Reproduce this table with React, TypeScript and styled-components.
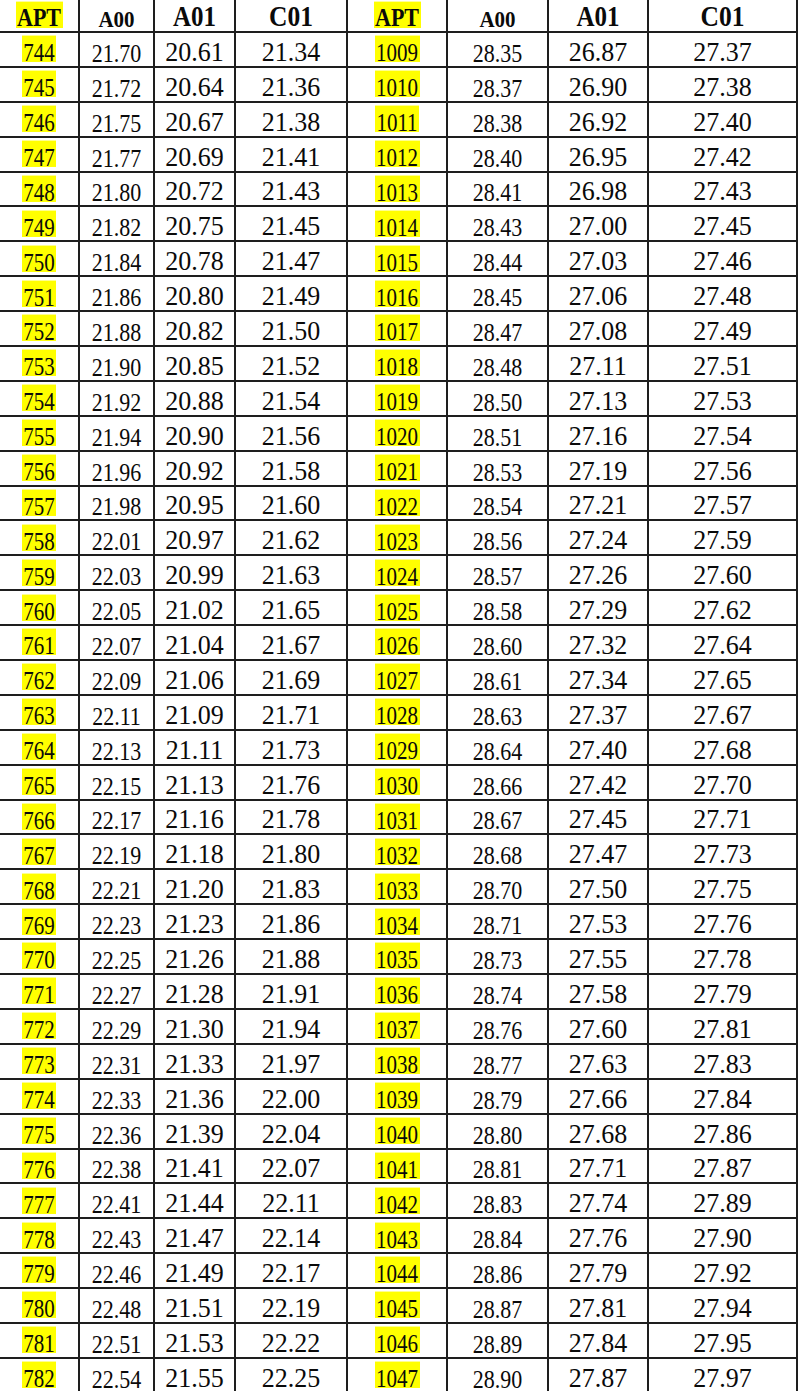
import React from "react";
import styled, { createGlobalStyle } from "styled-components";

const GlobalStyle = createGlobalStyle`
  html, body {
    margin: 0;
    padding: 0;
    background: #fff;
    overflow: hidden;
  }
  body {
    font-family: "Liberation Serif", "Times New Roman", serif;
    color: #0a0a0a;
  }
`;

const Sheet = styled.div`
  display: grid;
  grid-template-columns: 80px 75px 81px 112px 100px 101px 100px 149px;
  grid-template-rows: 33px;
  grid-auto-rows: 34.9px;
  width: 798px;
`;

const Cell = styled.div<{ $head?: boolean; $mark?: boolean }>`
  box-sizing: border-box;
  display: flex;
  align-items: flex-end;
  justify-content: center;
  border-right: 2px solid #1e1e1e;
  border-bottom: 2px solid #1e1e1e;
  padding-bottom: ${(p) => (p.$mark ? (p.$head ? 3.5 : 3.4) : 0)}px;
`;

// the source table is stretched a little in height, so each text is scaled on Y
const Value = styled.span<{ $size: number; $stretch: number; $bold?: boolean }>`
  display: inline-block;
  font-size: ${(p) => p.$size}px;
  font-weight: ${(p) => (p.$bold ? 700 : 400)};
  line-height: 1;
  white-space: nowrap;
  transform: scaleY(${(p) => p.$stretch});
  transform-origin: 50% 100%;
`;

const Mark = styled(Value)<{ $box: number; $lift: number }>`
  box-sizing: border-box;
  height: ${(p) => p.$box}px;
  padding: ${(p) => p.$lift}px 1.5px 0;
  background: #ffff00;
`;

interface Face {
  size: number;
  stretch: number;
  box?: number;
  lift?: number;
}

interface Column {
  title: string;
  head: Face;
  body: Face;
  mark?: boolean;
}

const half: Column[] = [
  {
    title: "APT",
    mark: true,
    head: { size: 22, stretch: 1.1, box: 23.9, lift: 4.3 },
    body: { size: 21, stretch: 1.2, box: 22.2, lift: 3.6 },
  },
  { title: "A00", head: { size: 21, stretch: 1.12 }, body: { size: 22, stretch: 1.12 } },
  { title: "A01", head: { size: 25, stretch: 1.16 }, body: { size: 26, stretch: 1.05 } },
  { title: "C01", head: { size: 25.5, stretch: 1.15 }, body: { size: 26, stretch: 1.05 } },
];
const columns = [...half, ...half];

const left = `
744 21.70 20.61 21.34
745 21.72 20.64 21.36
746 21.75 20.67 21.38
747 21.77 20.69 21.41
748 21.80 20.72 21.43
749 21.82 20.75 21.45
750 21.84 20.78 21.47
751 21.86 20.80 21.49
752 21.88 20.82 21.50
753 21.90 20.85 21.52
754 21.92 20.88 21.54
755 21.94 20.90 21.56
756 21.96 20.92 21.58
757 21.98 20.95 21.60
758 22.01 20.97 21.62
759 22.03 20.99 21.63
760 22.05 21.02 21.65
761 22.07 21.04 21.67
762 22.09 21.06 21.69
763 22.11 21.09 21.71
764 22.13 21.11 21.73
765 22.15 21.13 21.76
766 22.17 21.16 21.78
767 22.19 21.18 21.80
768 22.21 21.20 21.83
769 22.23 21.23 21.86
770 22.25 21.26 21.88
771 22.27 21.28 21.91
772 22.29 21.30 21.94
773 22.31 21.33 21.97
774 22.33 21.36 22.00
775 22.36 21.39 22.04
776 22.38 21.41 22.07
777 22.41 21.44 22.11
778 22.43 21.47 22.14
779 22.46 21.49 22.17
780 22.48 21.51 22.19
781 22.51 21.53 22.22
782 22.54 21.55 22.25
`;

const right = `
1009 28.35 26.87 27.37
1010 28.37 26.90 27.38
1011 28.38 26.92 27.40
1012 28.40 26.95 27.42
1013 28.41 26.98 27.43
1014 28.43 27.00 27.45
1015 28.44 27.03 27.46
1016 28.45 27.06 27.48
1017 28.47 27.08 27.49
1018 28.48 27.11 27.51
1019 28.50 27.13 27.53
1020 28.51 27.16 27.54
1021 28.53 27.19 27.56
1022 28.54 27.21 27.57
1023 28.56 27.24 27.59
1024 28.57 27.26 27.60
1025 28.58 27.29 27.62
1026 28.60 27.32 27.64
1027 28.61 27.34 27.65
1028 28.63 27.37 27.67
1029 28.64 27.40 27.68
1030 28.66 27.42 27.70
1031 28.67 27.45 27.71
1032 28.68 27.47 27.73
1033 28.70 27.50 27.75
1034 28.71 27.53 27.76
1035 28.73 27.55 27.78
1036 28.74 27.58 27.79
1037 28.76 27.60 27.81
1038 28.77 27.63 27.83
1039 28.79 27.66 27.84
1040 28.80 27.68 27.86
1041 28.81 27.71 27.87
1042 28.83 27.74 27.89
1043 28.84 27.76 27.90
1044 28.86 27.79 27.92
1045 28.87 27.81 27.94
1046 28.89 27.84 27.95
1047 28.90 27.87 27.97
`;

const parse = (text: string) =>
  text
    .trim()
    .split("\n")
    .map((line) => line.trim().split(/\s+/));

const leftRows = parse(left);
const rightRows = parse(right);
const rows = leftRows.map((row, i) => [...row, ...rightRows[i]]);

function Text({ face, mark, bold, children }: { face: Face; mark?: boolean; bold?: boolean; children: string }) {
  if (mark) {
    return (
      <Mark $size={face.size} $stretch={face.stretch} $bold={bold} $box={face.box ?? 22} $lift={face.lift ?? 4}>
        {children}
      </Mark>
    );
  }
  return (
    <Value $size={face.size} $stretch={face.stretch} $bold={bold}>
      {children}
    </Value>
  );
}

function App() {
  return (
    <>
      <GlobalStyle />
      <Sheet>
        {columns.map((col, c) => (
          <Cell key={`h${c}`} $head $mark={col.mark}>
            <Text face={col.head} mark={col.mark} bold>
              {col.title}
            </Text>
          </Cell>
        ))}
        {rows.map((row, r) =>
          row.map((value, c) => {
            const col = columns[c];
            return (
              <Cell key={`${r}-${c}`} $mark={col.mark}>
                <Text face={col.body} mark={col.mark}>
                  {value}
                </Text>
              </Cell>
            );
          })
        )}
      </Sheet>
    </>
  );
}

export default App;
